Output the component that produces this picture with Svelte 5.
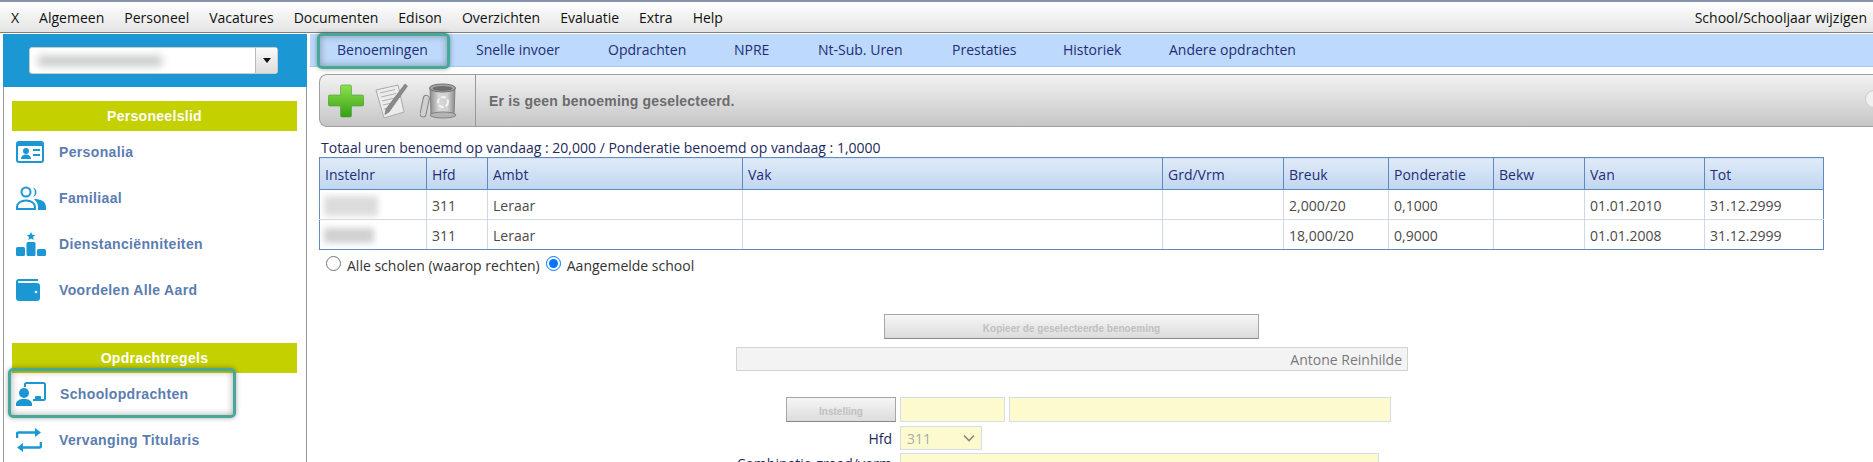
<script>
  const menu = ['X', 'Algemeen', 'Personeel', 'Vacatures', 'Documenten', 'Edison', 'Overzichten', 'Evaluatie', 'Extra', 'Help'];
  const tabs = ['Benoemingen', 'Snelle invoer', 'Opdrachten', 'NPRE', 'Nt-Sub. Uren', 'Prestaties', 'Historiek', 'Andere opdrachten'];
  const cols = [
    ['Instelnr', 107], ['Hfd', 61], ['Ambt', 255], ['Vak', 420], ['Grd/Vrm', 121],
    ['Breuk', 105], ['Ponderatie', 105], ['Bekw', 91], ['Van', 120], ['Tot', 119]
  ];
  const rows = [
    ['', '311', 'Leraar', '', '', '2,000/20', '0,1000', '', '01.01.2010', '31.12.2999'],
    ['', '311', 'Leraar', '', '', '18,000/20', '0,9000', '', '01.01.2008', '31.12.2999']
  ];
</script>

<div class="page">
  <nav class="menubar">
    <div class="menu-left">
      {#each menu as m}<span>{m}</span>{/each}
    </div>
    <span>School/Schooljaar wijzigen</span>
  </nav>

  <div class="body">
    <aside class="side">
      <div class="side-head">
        <div class="combo">
          <div class="combo-field"><i class="blur-text"></i></div>
          <div class="combo-btn"><i class="caret"></i></div>
        </div>
      </div>
      <div class="side-list">
        <h3>Personeelslid</h3>
        <ul class="first">
          <li>
            <svg viewBox="0 0 28 22" width="28" height="22"><rect x="0" y="0" width="28" height="22" rx="3" fill="#1b97d3"/><rect x="2" y="5" width="24" height="15" rx="1" fill="#fff"/><circle cx="10" cy="10" r="3" fill="#1b97d3"/><path d="M5 18c0-3 2-4.500 5-4.500s5 1.500 5 4.500z" fill="#1b97d3"/><rect x="17" y="8" width="7" height="2" fill="#1b97d3"/><rect x="17" y="13" width="7" height="2" fill="#1b97d3"/></svg>
            <span>Personalia</span>
          </li>
          <li>
            <svg viewBox="0 0 30 24" width="30" height="24"><path d="M17 1.500a5 5 0 0 1 0 9.500a7 7 0 0 0 0-9.500z" fill="#1b97d3"/><path d="M18 13c6 0 12 2 12 8v3h-8v-3c0-3-1.500-5.500-4-8z" fill="#1b97d3"/><circle cx="10" cy="6" r="4.500" fill="#fff" stroke="#1b97d3" stroke-width="2"/><path d="M1 23v-2c0-4 4-6.500 9-6.500s9 2.500 9 6.500v2z" fill="#fff" stroke="#1b97d3" stroke-width="2"/></svg>
            <span>Familiaal</span>
          </li>
          <li>
            <svg viewBox="0 0 30 24" width="30" height="24"><path d="M15 0l1.300 2.800 3 .3-2.300 2 .7 3-2.700-1.600-2.700 1.600.7-3-2.300-2 3-.3z" fill="#1b97d3"/><rect x="0" y="15" width="9" height="9" rx="1.500" fill="#1b97d3"/><rect x="10.500" y="10" width="9" height="14" rx="1.500" fill="#1b97d3"/><rect x="21" y="17" width="9" height="7" rx="1.500" fill="#1b97d3"/></svg>
            <span>Dienstanciënniteiten</span>
          </li>
          <li>
            <svg viewBox="0 0 24 22" width="24" height="22"><path d="M3 0h19v2H3a1 1 0 0 0 0 2h18a3 3 0 0 1 3 3v12a3 3 0 0 1-3 3H3a3 3 0 0 1-3-3V3a3 3 0 0 1 3-3z" fill="#1b97d3"/><circle cx="20" cy="13" r="1.300" fill="#fff"/></svg>
            <span>Voordelen Alle Aard</span>
          </li>
        </ul>
        <h3 class="second">Opdrachtregels</h3>
        <ul class="work">
          <li>
            <svg viewBox="0 0 30 24" width="30" height="24"><path d="M9 5V2.500A1.500 1.500 0 0 1 10.500 1h17A1.500 1.500 0 0 1 29 2.500v14a1.500 1.500 0 0 1-1.500 1.500H17" fill="none" stroke="#1b97d3" stroke-width="2"/><circle cx="8" cy="11" r="5" fill="#1b97d3"/><path d="M0 24v-2c0-3 3-5 8-5s8 2 8 5v2z" fill="#1b97d3"/><rect x="19" y="14" width="6" height="4" rx="1" fill="#1b97d3"/></svg>
            <span class="school">Schoolopdrachten</span>
          </li>
          <li>
            <svg viewBox="0 0 26 24" width="26" height="24"><path d="M1 10V6a1.500 1.500 0 0 1 1.500-1.500H19M25 14v4a1.500 1.500 0 0 1-1.500 1.500H7" fill="none" stroke="#1b97d3" stroke-width="2.600"/><path d="M19 0l6 4.500-6 4.500zM7 15l-6 4.500 6 4.500z" fill="#1b97d3"/></svg>
            <span>Vervanging Titularis</span>
          </li>
        </ul>
        <div class="mark mark-school"></div>
      </div>
    </aside>

    <main class="main">
      <div class="tabs">
        {#each tabs as t, i}<span class="tab tab-{i}">{t}</span>{/each}
        <div class="mark mark-tab"></div>
      </div>

      <div class="toolbar">
        <div class="tools">
          <svg class="plus" viewBox="0 0 36 34" width="36" height="34"><defs><linearGradient id="g" x1="0" y1="0" x2="0" y2="1"><stop offset="0" stop-color="#8ee04c"/><stop offset="1" stop-color="#35a015"/></linearGradient><linearGradient id="b" x1="0" y1="0" x2="1" y2="0"><stop offset="0" stop-color="#8c8c8c"/><stop offset=".35" stop-color="#d8d8d8"/><stop offset=".7" stop-color="#d0d0d0"/><stop offset="1" stop-color="#8c8c8c"/></linearGradient></defs><path d="M14 1h8a1.500 1.500 0 0 1 1.500 1.500V11H34a2 2 0 0 1 2 2v7a2 2 0 0 1-2 2H23.500v9.500A1.500 1.500 0 0 1 22 33h-8a1.500 1.500 0 0 1-1.500-1.500V22H2a2 2 0 0 1-2-2v-7a2 2 0 0 1 2-2h10.500V2.500A1.500 1.500 0 0 1 14 1z" fill="url(#g)" stroke="#4f9f35" stroke-width=".6"/></svg>
          <svg viewBox="0 0 34 36" width="34" height="36"><path d="M1 7l22-5 6 27-20 6z" fill="#ececec" stroke="#aaa"/><path d="M5 10l15-3.500M6 14l15-3.500M7 18l13-3M8 22l9-2M9 26l6-1.400" stroke="#b0b0b0"/><path d="M30 1l2.500 2L14 29l-4 2.500L11 26z" fill="#8a8a8a" stroke="#6f6f6f" stroke-width=".6"/></svg>
          <svg viewBox="0 0 38 36" width="38" height="36"><path d="M10 5l1 26h23l1-26z" fill="url(#b)" stroke="#808080"/><ellipse cx="22.500" cy="5" rx="13" ry="4" fill="#a4a4a4" stroke="#707070"/><ellipse cx="22.500" cy="5.500" rx="10" ry="2.400" fill="#6e6e6e"/><rect x="1.500" y="12" width="6" height="22" rx="3" transform="rotate(12 4 24)" fill="#d0d0d0" stroke="#808080"/><ellipse cx="23" cy="32" rx="13" ry="3" fill="#b4b4b4" stroke="#808080"/><circle cx="23" cy="19" r="5" fill="none" stroke="#f4f4f4" stroke-width="2" stroke-dasharray="5 2"/></svg>
        </div>
        <div class="tool-text">Er is geen benoeming geselecteerd.</div>
        <i class="tool-circle"></i>
      </div>

      <p class="total">Totaal uren benoemd op vandaag : 20,000 / Ponderatie benoemd op vandaag : 1,0000</p>

      <table>
        <colgroup>{#each cols as c}<col style="width:{c[1]}px" />{/each}</colgroup>
        <thead><tr>{#each cols as c}<th>{c[0]}</th>{/each}</tr></thead>
        <tbody>
          {#each rows as r, ri}
            <tr>
              {#each r as v, i}
                <td>{#if i === 0}<i class="blur-cell blur-{ri}"></i>{:else}{v}{/if}</td>
              {/each}
            </tr>
          {/each}
        </tbody>
      </table>

      <div class="radios">
        <label><input type="radio" name="s" /> Alle scholen (waarop rechten)</label>
        <label><input type="radio" name="s" checked /> Aangemelde school</label>
      </div>

      <div class="form">
        <button class="copy" disabled>Kopieer de geselecteerde benoeming</button>
        <div class="name">Antone Reinhilde</div>
        <div class="row r1">
          <button class="inst" disabled>Instelling</button>
          <div class="yl y1"></div>
          <div class="yl y2"></div>
        </div>
        <div class="row r2">
          <span class="lbl">Hfd</span>
          <div class="yl hfd">311<svg viewBox="0 0 12 8" width="12" height="8"><path d="M1 1.500l5 5 5-5" fill="none" stroke="#888" stroke-width="1.600"/></svg></div>
        </div>
        <div class="row r3">
          <span class="lbl">Combinatie graad/vorm</span>
          <div class="yl combi"><svg viewBox="0 0 12 8" width="12" height="8"><path d="M1 1.500l5 5 5-5" fill="none" stroke="#888" stroke-width="1.600"/></svg></div>
        </div>
      </div>
    </main>
  </div>
</div>

<style>
  :global(body) { margin: 0; background: #fff; }
  .page {
    width: 1873px; height: 462px; overflow: hidden; position: relative;
    font-family: "Open Sans", "Liberation Sans", sans-serif; font-size: 14px; color: #1c2a5c;
  }
  .menubar {
    height: 30px; box-sizing: content-box;
    border-top: 2px solid #8393ab; border-bottom: 1px solid #7f7f7f;
    background: linear-gradient(#fff, #e4e4e4);
    display: flex; align-items: center; justify-content: space-between;
    padding: 0 6px 0 11px; color: #111;
  }
  .menu-left { display: flex; gap: 20px; }
  .body { display: flex; margin-top: 1px; }
  .side { width: 304px; margin-left: 3px; flex: none; }
  .side-head { height: 53px; background: #1b97d3; display: flex; align-items: center; justify-content: center; }
  .combo { display: flex; width: 249px; height: 27px; box-sizing: border-box; background: #fff; border-radius: 3px; border: 1px solid #ccc; margin-right: 3px; }
  .combo-field { flex: 1; display: flex; align-items: center; padding-left: 8px; }
  .blur-text { width: 124px; height: 10px; background: #c4c6c8; filter: blur(4px); }
  .combo-btn { width: 21px; border-left: 1px solid #bbb; background: linear-gradient(#fafafa, #ddd); display: flex; align-items: center; justify-content: center; }
  .caret { border: 4px solid transparent; border-top: 5px solid #111; border-bottom: 0; }
  .side-list {
    position: relative; height: 390px; box-sizing: border-box;
    border-left: 1px solid #9a9a9a; border-right: 1px solid #9a9a9a;
    padding: 14px 9px 0 8px;
  }
  h3 {
    margin: 0; height: 30px; background: #c4d000; color: #fff; text-align: center;
    font: bold 14px/30px "Liberation Sans", sans-serif; letter-spacing: .3px;
  }
  ul { list-style: none; margin: 0; padding: 0 0 0 4px; }
  li {
    height: 46px; display: flex; align-items: center;
    font: bold 14px "Liberation Sans", sans-serif; color: #5b7db1; letter-spacing: .35px;
  }
  li svg { flex: none; }
  li span { position: absolute; left: 55px; }
  li span.school { left: 56px; }
  .first { margin-top: -2px; }
  .second { margin-top: 30px; }
  .work { margin-top: -2px; }
  .mark {
    position: absolute; box-sizing: border-box; border: 3px solid #45a898; border-radius: 5px;
    box-shadow: 0 0 5px rgba(0,0,0,.35), inset 0 0 7px rgba(60,60,60,.45); pointer-events: none;
  }
  .mark-school { left: 4px; top: 281px; width: 228px; height: 50px; }
  .mark-tab { left: 7px; top: -1px; width: 133px; height: 36px; }

  .main { flex: 1; margin-left: 3px; min-width: 0; }
  .tabs {
    position: relative; height: 32px; background: #bdd9fb; border-bottom: 1px solid #a8c8f0;
    display: flex; align-items: center; color: #1f2d78;
  }
  .tab { position: absolute; top: 6px; white-space: nowrap; }
  .tab-0 { left: 27px; } .tab-1 { left: 166px; } .tab-2 { left: 298px; } .tab-3 { left: 424px; }
  .tab-4 { left: 508px; } .tab-5 { left: 642px; } .tab-6 { left: 753px; } .tab-7 { left: 859px; }

  .toolbar {
    margin: 7px 0 0 9px; height: 53px; box-sizing: border-box; position: relative; overflow: hidden;
    border: 1px solid #a0a0a0; border-radius: 8px 0 0 8px; border-width: 1px 0 1px 1px;
    background: linear-gradient(#f2f2f2, #c6c6c6); display: flex; align-items: center;
  }
  .tools { width: 156px; height: 100%; border-right: 1px solid #999; display: flex; align-items: center; gap: 11px; padding-left: 8px; box-sizing: border-box; flex: none; }
  .tool-text { margin-left: 13px; font: bold 14px "Liberation Sans", sans-serif; color: #6b6b70; letter-spacing: .2px; }
  .tool-circle { position: absolute; right: -10px; top: 15px; width: 16px; height: 16px; border-radius: 50%; background: #f0f0f0; border: 1px solid #ccc; }

  .total { margin: 13px 0 0 11px; line-height: 16px; color: #1c2a5c; }
  table {
    margin: 1px 0 0 9px; width: 1505px; table-layout: fixed; border-collapse: collapse;
    border: 1px solid #5f8abf; color: #4a4a4a;
  }
  th {
    box-sizing: border-box; height: 32px; padding: 2px 5px 0; text-align: left; font-weight: 400; color: #1f2d78;
    border: 1px solid #5f8abf;
    background: linear-gradient(#e0ebf8, #c0d6f0);
  }
  td { box-sizing: border-box; height: 30px; padding: 2px 5px 0; border: 1px solid #d0d9e8; }
  tr:last-child td { border-bottom: 1px solid #5f8abf; }
  td:first-child { border-left: 1px solid #5f8abf; padding-left: 4px; }
  td:last-child { border-right: 1px solid #5f8abf; }
  .blur-cell { display: block; background: #dcdcdc; filter: blur(3px); }
  .blur-0 { width: 54px; height: 20px; }
  .blur-1 { width: 50px; height: 15px; background: #d0d0d0; }

  .radios { display: flex; gap: 6px; margin: 2px 0 0 16px; height: 26px; align-items: center; color: #333; }
  label { display: flex; align-items: center; gap: 6px; }
  input { margin: 0; width: 15px; height: 15px; position: relative; top: -2px; accent-color: #0075ff; }

  .form { margin-top: 36px; }
  button { display: block; box-sizing: border-box; border: 1px solid #a6a6a6; background: linear-gradient(#f6f6f6, #dcdcdc); color: #c0c0c0; font: bold 10px/25px "Liberation Sans", sans-serif; padding: 1px 0 0; border-bottom-color: #888; }
  .copy { margin-left: 574px; width: 375px; height: 25px; }
  .name { margin: 8px 0 0 426px; width: 672px; height: 24px; box-sizing: border-box; background: #f3f3f3; border: 1px solid #d2d2d2; text-align: right; padding: 0 5px; line-height: 23px; color: #7a7a7a; font-size: 14px; }
  .row { display: flex; margin-left: 476px; }
  .r1 { margin-top: 26px; }
  .inst { width: 110px; height: 25px; margin-right: 4px; }
  .yl { box-sizing: border-box; background: #fdfbcd; border: 1px solid #d5dded; height: 25px; }
  .y1 { width: 105px; margin-right: 4px; }
  .y2 { width: 382px; }
  .r2, .r3 { align-items: center; position: relative; margin-left: 590px; }
  .r2 { margin-top: 4px; }
  .r3 { margin-top: 3px; }
  .lbl { position: absolute; right: 100%; margin-right: 8px; white-space: nowrap; color: #1c2a5c; font-size: 14px; }
  .r3 .lbl { top: 1px; }
  .hfd { width: 82px; height: 24px; display: flex; align-items: center; justify-content: space-between; padding: 0 6px; color: #aaa; font-size: 14px; }
  .combi { width: 479px; height: 24px; display: flex; align-items: center; justify-content: flex-end; padding-right: 8px; }
</style>
